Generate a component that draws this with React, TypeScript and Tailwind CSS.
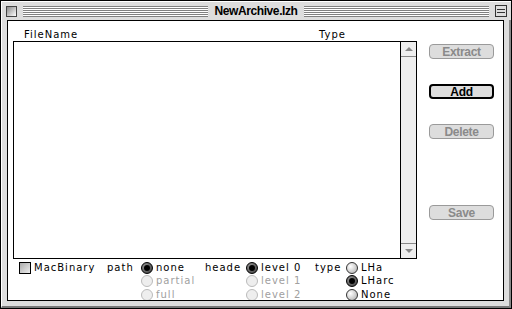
import React from "react";

const geneva = { fontFamily: '"DejaVu Sans", "Liberation Sans", sans-serif' };
const charcoal = { fontFamily: '"Liberation Sans", Arial, sans-serif' };

function Stripes({ className }: { className: string }) {
    return (
        <div
            className={`h-[11px] bg-[repeating-linear-gradient(to_bottom,#808080_0px,#808080_1px,#ffffff_1px,#ffffff_2px)] ${className}`}
        />
    );
}

function MacButton({ label, enabled = false }: { label: string; enabled?: boolean }) {
    return (
        <div
            className={`h-[15px] w-[65px] rounded-[4px] flex items-center justify-center text-[12px] font-bold leading-none tracking-[-0.3px] ${
                enabled
                    ? "border-2 border-black bg-[#dddddd] text-black"
                    : "border border-[#9a9a9a] bg-[#dddddd] text-[#8a8a8a]"
            }`}
            style={charcoal}
        >
            {label}
        </div>
    );
}

function Radio({ state }: { state: "on" | "off" | "disabled" }) {
    if (state === "disabled") {
        return <div className="w-[12px] h-[12px] rounded-full border border-[#bbbbbb] bg-[#eeeeee]" />;
    }
    if (state === "on") {
        return (
            <div className="w-[12px] h-[12px] rounded-full border border-black bg-[radial-gradient(circle_at_35%_35%,#9a9a9a,#333333)] flex items-center justify-center">
                <div className="w-[6px] h-[6px] rounded-full bg-black" />
            </div>
        );
    }
    return (
        <div className="w-[12px] h-[12px] rounded-full border border-[#333333] bg-[radial-gradient(circle_at_35%_35%,#ffffff,#aaaaaa)]" />
    );
}

function Option({ label, state }: { label: string; state: "on" | "off" | "disabled" }) {
    return (
        <div className="flex items-center h-[13.5px] gap-[3px]">
            <Radio state={state} />
            <span className={state === "disabled" ? "text-[#a0a0a0]" : "text-black"}>{label}</span>
        </div>
    );
}

export default function App() {
    return (
        <div className="w-[512px] h-[309px] border border-black bg-[#dddddd] flex flex-col overflow-hidden">
            {/* title bar */}
            <div className="h-[19px] shrink-0 flex items-center px-[4px] border-t border-l border-white">
                <div className="w-[11px] h-[11px] border border-[#444] bg-[linear-gradient(135deg,#888,#fff)]" />
                <Stripes className="flex-1 ml-[6px]" />
                <div className="px-[6px] text-[12px] font-bold leading-none tracking-[-0.4px] text-black" style={charcoal}>
                    NewArchive.lzh
                </div>
                <Stripes className="flex-1 mr-[6px]" />
                <div className="w-[12px] h-[12px] border border-[#333] bg-[#ddd] flex flex-col justify-center gap-[2px] px-[1px]">
                    <div className="h-[1px] bg-[#333]" />
                    <div className="h-[1px] bg-[#333]" />
                </div>
            </div>
            {/* content frame */}
            <div className="flex-1 min-h-0 flex px-[5px] pb-[5px] border-l border-white border-b-2 border-b-[#777] border-r-2 border-r-[#888]">
                <div className="flex-1 bg-white border border-black flex flex-col text-[10px] tracking-[1px] leading-none overflow-hidden" style={geneva}>
                    <div className="flex shrink-0 pl-[5px] pt-[9px]">
                        <div className="w-[404px] flex flex-col">
                            <div className="flex h-[11px] items-start">
                                <span className="ml-[11px] w-[295px]">FileName</span>
                                <span>Type</span>
                            </div>
                            <div className="h-[218px] border border-black flex">
                                <div className="flex-1" />
                                <div className="w-[16px] border-l border-black bg-[#eeeeee] flex flex-col justify-between">
                                    <div className="h-[15px] border-b border-[#888] flex items-center justify-center">
                                        <div className="w-0 h-0 border-l-[4px] border-r-[4px] border-b-[4px] border-l-transparent border-r-transparent border-b-[#888]" />
                                    </div>
                                    <div className="h-[15px] border-t border-[#888] flex items-center justify-center">
                                        <div className="w-0 h-0 border-l-[4px] border-r-[4px] border-t-[4px] border-l-transparent border-r-transparent border-t-[#888]" />
                                    </div>
                                </div>
                            </div>
                        </div>
                        <div className="ml-[12px] pt-[14px] flex flex-col">
                            <MacButton label="Extract" />
                            <div className="h-[25px]" />
                            <MacButton label="Add" enabled />
                            <div className="h-[25px]" />
                            <MacButton label="Delete" />
                            <div className="h-[66px]" />
                            <MacButton label="Save" />
                        </div>
                    </div>
                    {/* options row */}
                    <div className="flex shrink-0 pt-[2px]">
                        <div className="ml-[11px] flex items-center h-[13.5px] gap-[3px] w-[88px]">
                            <div className="w-[12px] h-[12px] border border-black bg-[linear-gradient(135deg,#aaa,#eee)]" />
                            <span>MacBinary</span>
                        </div>
                        <div className="w-[34px] h-[13.5px] flex items-center">path</div>
                        <div className="flex flex-col w-[64px]">
                            <Option label="none" state="on" />
                            <Option label="partial" state="disabled" />
                            <Option label="full" state="disabled" />
                        </div>
                        <div className="w-[41px] h-[13.5px] flex items-center">heade</div>
                        <div className="flex flex-col w-[69px]">
                            <Option label="level 0" state="on" />
                            <Option label="level 1" state="disabled" />
                            <Option label="level 2" state="disabled" />
                        </div>
                        <div className="w-[31px] h-[13.5px] flex items-center">type</div>
                        <div className="flex flex-col">
                            <Option label="LHa" state="off" />
                            <Option label="LHarc" state="on" />
                            <Option label="None" state="off" />
                        </div>
                    </div>
                </div>
            </div>
        </div>
    );
}
